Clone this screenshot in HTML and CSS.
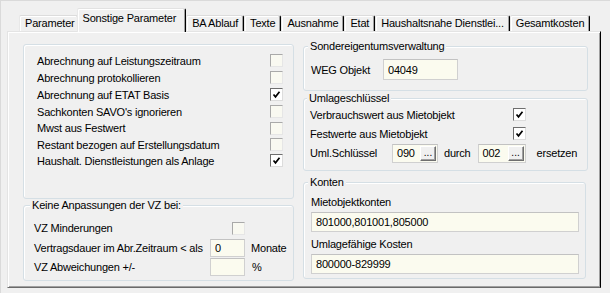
FILE: index.html
```html
<!DOCTYPE html>
<html lang="de">
<head>
    <meta charset="UTF-8">
    <title>Sonstige Parameter</title>
    <link rel="stylesheet" href="styles.css">
</head>
<body>
    <div class="window">
        <div class="tabstrip">
            <div class="tab">Parameter</div>
            <div class="tab active">Sonstige Parameter</div>
            <div class="tab">BA Ablauf</div>
            <div class="tab">Texte</div>
            <div class="tab">Ausnahme</div>
            <div class="tab">Etat</div>
            <div class="tab">Haushaltsnahe Dienstlei...</div>
            <div class="tab">Gesamtkosten</div>
        </div>

        <div class="panel">
            <div class="col col-left">
                <div class="group options">
                    <div class="opt-row"><span>Abrechnung auf Leistungszeitraum</span><span class="check"></span></div>
                    <div class="opt-row"><span>Abrechnung protokollieren</span><span class="check"></span></div>
                    <div class="opt-row"><span>Abrechnung auf ETAT Basis</span><span class="check on"><svg viewBox="0 0 11 11"><path d="M2.5 5.5 L4.5 7.8 L8.5 2.8"/></svg></span></div>
                    <div class="opt-row"><span>Sachkonten SAVO's ignorieren</span><span class="check"></span></div>
                    <div class="opt-row"><span>Mwst aus Festwert</span><span class="check"></span></div>
                    <div class="opt-row"><span>Restant bezogen auf Erstellungsdatum</span><span class="check"></span></div>
                    <div class="opt-row"><span>Haushalt. Dienstleistungen als Anlage</span><span class="check on"><svg viewBox="0 0 11 11"><path d="M2.5 5.5 L4.5 7.8 L8.5 2.8"/></svg></span></div>
                </div>

                <div class="group vz">
                    <div class="caption">Keine Anpassungen der VZ bei:</div>
                    <div class="vz-grid">
                        <span>VZ Minderungen</span>
                        <span class="check vz-check"></span>
                        <span></span>

                        <span>Vertragsdauer im Abr.Zeitraum &lt; als</span>
                        <input class="field" type="text" value="0" readonly>
                        <span>Monate</span>

                        <span>VZ Abweichungen +/-</span>
                        <input class="field" type="text" value="" readonly>
                        <span class="unit-pct">%</span>
                    </div>
                </div>
            </div>

            <div class="col col-right">
                <div class="group seg">
                    <div class="caption">Sondereigentumsverwaltung</div>
                    <div class="weg-row">
                        <span class="weg-label">WEG Objekt</span>
                        <input class="field weg-field" type="text" value="04049" readonly>
                    </div>
                </div>

                <div class="group uml">
                    <div class="caption">Umlageschlüssel</div>
                    <div class="uml-row"><span>Verbrauchswert aus Mietobjekt</span><span class="check on"><svg viewBox="0 0 11 11"><path d="M2.5 5.5 L4.5 7.8 L8.5 2.8"/></svg></span></div>
                    <div class="uml-row"><span>Festwerte aus Mietobjekt</span><span class="check on"><svg viewBox="0 0 11 11"><path d="M2.5 5.5 L4.5 7.8 L8.5 2.8"/></svg></span></div>
                    <div class="key-row">
                        <span class="key-label">Uml.Schlüssel</span>
                        <span class="picker"><span>090</span><span class="dots">...</span></span>
                        <span class="key-mid">durch</span>
                        <span class="picker picker-wide"><span>002</span><span class="dots">...</span></span>
                        <span class="key-end">ersetzen</span>
                    </div>
                </div>

                <div class="group konten">
                    <div class="caption">Konten</div>
                    <div class="konten-label">Mietobjektkonten</div>
                    <input class="field wide" type="text" value="801000,801001,805000" readonly>
                    <div class="konten-label">Umlagefähige Kosten</div>
                    <input class="field wide" type="text" value="800000-829999" readonly>
                </div>
            </div>
        </div>
    </div>
</body>
</html>
```

FILE: styles.css
```css
html, body {
    margin: 0;
    padding: 0;
    background-color: #f0f0f0;
}
body {
    font-family: "Liberation Sans", Arial, sans-serif;
    font-size: 11px;
    letter-spacing: -0.2px;
    color: #000;
}
.window {
    width: 610px;
    height: 293px;
    box-sizing: border-box;
    border-top: 1px solid #dadada;
    border-left: 1px solid #dadada;
    padding-left: 6px;
    overflow: hidden;
}

/* Tabs */
.tabstrip {
    display: flex;
    align-items: flex-end;
    height: 30px;
    padding-left: 12px;
}
.tab {
    height: 15px;
    line-height: 15px;
    padding: 0 5px 0 5px;
    border-top: 1px solid #dcdcdc;
    border-left: 1px solid #e8e8e8;
    border-right: 1px solid #000;
    box-shadow: inset -1px 0 #a0a0a0, inset 1px 1px #fff;
    border-radius: 2px 2px 0 0;
    background-color: #f0f0f0;
    white-space: nowrap;
}
.tab:first-child {
    padding-right: 3px;
}
.tab.active {
    height: 23px;
    line-height: 19px;
    margin: 0 -1px -1px -2px;
    padding: 0 9px 0 5px;
    position: relative;
    z-index: 1;
    border-top-color: #e2e2e2;
}
.tab.active + .tab {
    margin-left: 1px;
}

/* Panel */
.panel {
    width: 594px;
    height: 257px;
    box-sizing: border-box;
    border-top: 1px solid #e4e4e4;
    border-left: 1px solid #e4e4e4;
    border-right: 1px solid #000;
    border-bottom: 1px solid #6a6a6a;
    box-shadow: inset 1px 1px #fff, inset -1px -1px #a0a0a0;
    padding: 12px 0 0 15px;
    display: flex;
    gap: 9px;
}
.col {
    display: flex;
    flex-direction: column;
}
.col-left {
    width: 271px;
}
.col-right {
    width: 285px;
    padding-top: 2px;
}

/* Group boxes */
.group {
    box-sizing: border-box;
    border: 1px solid #d5dfe5;
    border-radius: 3px;
    box-shadow: inset 1px 1px #fff;
}
.caption {
    width: fit-content;
    margin: -7px 0 0 4px;
    padding: 0 2px;
    line-height: 13px;
    background-color: #f0f0f0;
}

.options {
    height: 155px;
    padding: 7px 10px 0 13px;
}
.opt-row {
    display: flex;
    justify-content: space-between;
    align-items: center;
    height: 17px;
}
.opt-row:nth-child(5) {
    height: 16px;
}
.opt-row:nth-child(7) {
    height: 15px;
}

.check {
    width: 13px;
    height: 13px;
    box-sizing: border-box;
    border: 1px solid;
    border-color: #a9a9a9 #e6e6e6 #e6e6e6 #a9a9a9;
    background-color: #f9f9f1;
    display: inline-flex;
    flex-shrink: 0;
}
.check.on {
    border-color: #6e6e6e #dcdcdc #dcdcdc #6e6e6e;
    background-color: #fff;
}
.check svg {
    width: 11px;
    height: 11px;
}
.check path {
    fill: none;
    stroke: #000;
    stroke-width: 1.7;
}

.field {
    font-family: "Liberation Sans", Arial, sans-serif;
    font-size: 11px;
    letter-spacing: -0.2px;
    color: #000;
    margin: 0;
    box-sizing: border-box;
    border: 1px solid #d0d0d0;
    border-top-color: #c2c2c2;
    background-color: #fbfbef;
    padding: 0 0 0 4px;
    outline: none;
}

/* VZ group */
.vz {
    height: 76px;
    margin-top: 6px;
    padding-left: 10px;
}
.vz .caption {
    margin-left: -4px;
}
.vz-grid {
    display: grid;
    grid-template-columns: 170px 35px auto;
    grid-template-rows: 20px 19px 20px;
    align-items: center;
    column-gap: 6px;
    margin-top: 6px;
}
.vz-grid .field {
    width: 35px;
    height: 18px;
}
.vz-check {
    justify-self: end;
}
.unit-pct {
    padding-left: 1px;
}

/* Right column */
.seg {
    height: 45px;
    padding-left: 7px;
}
.seg .caption,
.uml .caption,
.konten .caption {
    margin-left: -3px;
}
.weg-row {
    display: flex;
    align-items: center;
    margin-top: 6px;
}
.weg-label {
    width: 72px;
}
.weg-field {
    width: 75px;
    height: 21px;
}

.uml {
    height: 73px;
    margin-top: 7px;
    padding: 0 0 0 6px;
}
.uml-row {
    display: flex;
    justify-content: space-between;
    align-items: center;
    height: 19px;
    width: 216px;
}
.uml-row:first-of-type {
    margin-top: 3px;
}
.key-row {
    display: flex;
    align-items: center;
    height: 20px;
}
.key-label {
    width: 82px;
}
.picker {
    display: flex;
    align-items: center;
    justify-content: space-between;
    width: 46px;
    height: 19px;
    box-sizing: border-box;
    border: 1px solid #d0d0d0;
    border-top-color: #c2c2c2;
    background-color: #fbfbef;
    padding: 0 1px 0 4px;
}
.picker-wide {
    width: 48px;
}
.dots {
    display: flex;
    align-items: flex-end;
    justify-content: center;
    width: 16px;
    height: 15px;
    box-sizing: border-box;
    padding-bottom: 3px;
    border: 1px solid;
    border-color: #fff #6e6e6e #6e6e6e #fff;
    box-shadow: inset -1px -1px #a0a0a0;
    background-color: #f0f0f0;
    font-size: 10px;
    line-height: 8px;
    letter-spacing: 0;
}
.key-mid {
    padding: 0 7px 0 6px;
}
.key-end {
    padding-left: 11px;
}

.konten {
    height: 97px;
    margin: 11px 2px 0 0;
    padding-left: 7px;
}
.konten-label {
    line-height: 13px;
    margin-top: 7px;
}
.konten-label + .field + .konten-label {
    margin-top: 6px;
}
.konten .wide {
    display: block;
    width: 268px;
    height: 20px;
    margin-top: 3px;
}
```
